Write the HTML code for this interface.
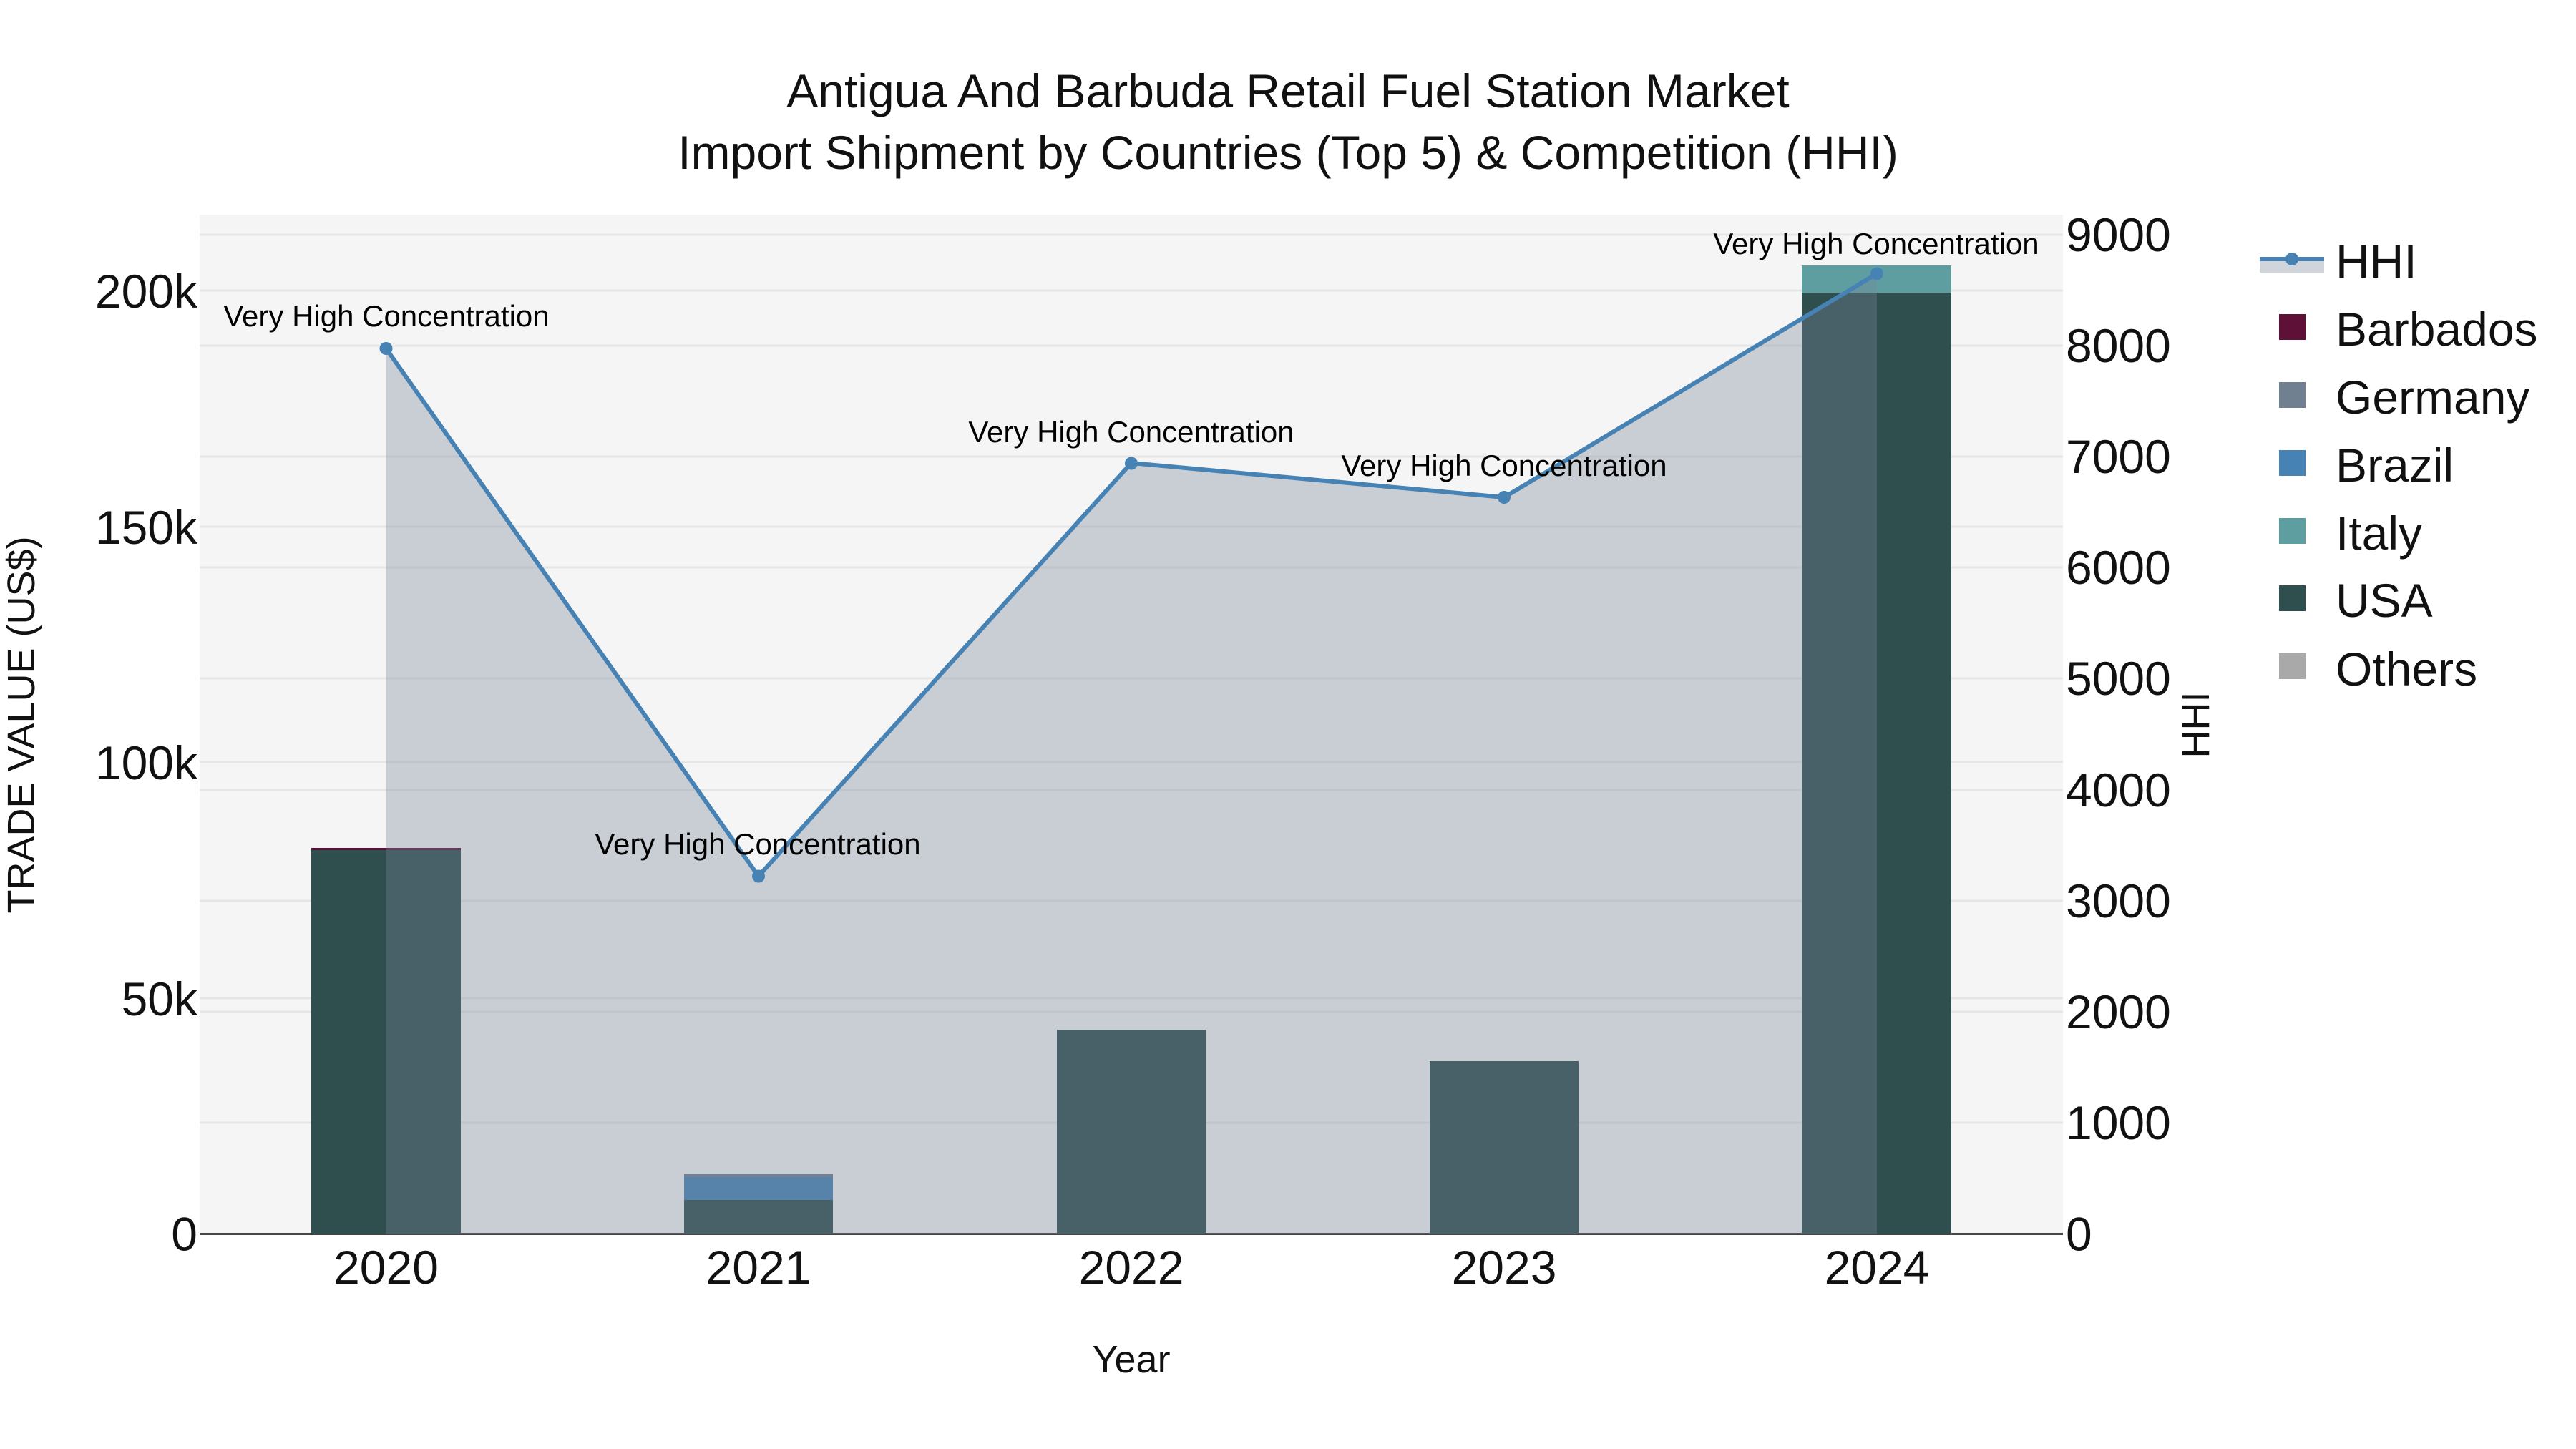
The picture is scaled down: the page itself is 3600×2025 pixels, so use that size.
<!DOCTYPE html>
<html>
<head>
<meta charset="utf-8">
<style>
html,body{margin:0;padding:0;background:#fff;}
svg{display:block;}
text{font-family:"Liberation Sans",Arial,sans-serif;}
</style>
</head>
<body>
<svg xmlns="http://www.w3.org/2000/svg" width="3600" height="2025" viewBox="0 0 3600 2025">
<rect width="3600" height="2025" fill="#fff"/>
<rect x="279" y="300" width="2604" height="1425" fill="#f5f5f5"/>
<g stroke="#e6e6e6" stroke-width="3">
<line x1="279" x2="2883" y1="328" y2="328"/>
<line x1="279" x2="2883" y1="406" y2="406"/>
<line x1="279" x2="2883" y1="483" y2="483"/>
<line x1="279" x2="2883" y1="638" y2="638"/>
<line x1="279" x2="2883" y1="736" y2="736"/>
<line x1="279" x2="2883" y1="793" y2="793"/>
<line x1="279" x2="2883" y1="948" y2="948"/>
<line x1="279" x2="2883" y1="1065" y2="1065"/>
<line x1="279" x2="2883" y1="1104" y2="1104"/>
<line x1="279" x2="2883" y1="1259" y2="1259"/>
<line x1="279" x2="2883" y1="1395" y2="1395"/>
<line x1="279" x2="2883" y1="1414" y2="1414"/>
<line x1="279" x2="2883" y1="1569" y2="1569"/>
</g>
<line x1="279" x2="2883" y1="1724.5" y2="1724.5" stroke="#444" stroke-width="3"/>
<!-- bars -->
<rect x="435" y="1185" width="209" height="3" fill="#5f1037"/>
<rect x="435" y="1188" width="209" height="536" fill="#2f4f4f"/>
<rect x="956" y="1640" width="208" height="5" fill="#708090"/>
<rect x="956" y="1645" width="208" height="32" fill="#4682b4"/>
<rect x="956" y="1677" width="208" height="47" fill="#2f4f4f"/>
<rect x="1477" y="1439" width="208" height="285" fill="#2f4f4f"/>
<rect x="1998" y="1483" width="208" height="241" fill="#2f4f4f"/>
<rect x="2518" y="371" width="209" height="38" fill="#5f9ea0"/>
<rect x="2518" y="409" width="209" height="1315" fill="#2f4f4f"/>
<!-- area -->
<polygon points="539.5,487 1060,1224.5 1581,647 2102,695 2623,382.5 2623,1724.5 539.5,1724.5" fill="#778499" fill-opacity="0.35"/>
<polyline points="539.5,487 1060,1224.5 1581,647 2102,695 2623,382.5" fill="none" stroke="#4682b4" stroke-width="6"/>
<g fill="#4682b4">
<circle cx="539.5" cy="487" r="9"/>
<circle cx="1060" cy="1224.5" r="9"/>
<circle cx="1581" cy="647.5" r="9"/>
<circle cx="2102" cy="695" r="9"/>
<circle cx="2623" cy="382.5" r="9"/>
</g>
<!-- annotations -->
<g font-size="42" fill="#000" text-anchor="middle">
<text x="540" y="456">Very High Concentration</text>
<text x="1059" y="1194">Very High Concentration</text>
<text x="1581" y="618">Very High Concentration</text>
<text x="2102" y="665">Very High Concentration</text>
<text x="2622" y="355">Very High Concentration</text>
</g>
<!-- title -->
<g font-size="66" fill="#111" text-anchor="middle">
<text x="1800" y="150">Antigua And Barbuda Retail Fuel Station Market</text>
<text x="1800" y="236">Import Shipment by Countries (Top 5) &amp; Competition (HHI)</text>
</g>
<!-- left ticks -->
<g font-size="66" fill="#111" text-anchor="end">
<text x="276" y="430">200k</text>
<text x="276" y="760">150k</text>
<text x="276" y="1089">100k</text>
<text x="276" y="1419">50k</text>
<text x="276" y="1747.5">0</text>
</g>
<!-- right ticks -->
<g font-size="66" fill="#111" text-anchor="start">
<text x="2887" y="351">9000</text>
<text x="2887" y="506">8000</text>
<text x="2887" y="661">7000</text>
<text x="2887" y="816">6000</text>
<text x="2887" y="971">5000</text>
<text x="2887" y="1127">4000</text>
<text x="2887" y="1282">3000</text>
<text x="2887" y="1437">2000</text>
<text x="2887" y="1592">1000</text>
<text x="2887" y="1747.5">0</text>
</g>
<!-- x ticks -->
<g font-size="66" fill="#111" text-anchor="middle">
<text x="539.5" y="1794">2020</text>
<text x="1060" y="1794">2021</text>
<text x="1581" y="1794">2022</text>
<text x="2102" y="1794">2023</text>
<text x="2623" y="1794">2024</text>
</g>
<!-- axis titles -->
<text x="1581" y="1918" font-size="54" fill="#111" text-anchor="middle">Year</text>
<text transform="translate(48,1013) rotate(-90)" font-size="54" fill="#111" text-anchor="middle">TRADE VALUE (US$)</text>
<text transform="translate(3087,1013) rotate(-90)" font-size="54" fill="#111" text-anchor="middle">HHI</text>
<!-- legend -->
<rect x="3158" y="362" width="90" height="19" fill="#778499" fill-opacity="0.35"/>
<line x1="3158" x2="3248" y1="362" y2="362" stroke="#4682b4" stroke-width="6"/>
<circle cx="3203" cy="362" r="9" fill="#4682b4"/>
<rect x="3185" y="439" width="37" height="36" fill="#5f1037"/>
<rect x="3185" y="534" width="37" height="36" fill="#708090"/>
<rect x="3185" y="629" width="37" height="36" fill="#4682b4"/>
<rect x="3185" y="724" width="37" height="36" fill="#5f9ea0"/>
<rect x="3185" y="818" width="37" height="36" fill="#2f4f4f"/>
<rect x="3185" y="913" width="37" height="36" fill="#a9a9a9"/>
<g font-size="66" fill="#111">
<text x="3264" y="388">HHI</text>
<text x="3264" y="483">Barbados</text>
<text x="3264" y="578">Germany</text>
<text x="3264" y="673">Brazil</text>
<text x="3264" y="768">Italy</text>
<text x="3264" y="862">USA</text>
<text x="3264" y="958">Others</text>
</g>
</svg>
</body>
</html>
